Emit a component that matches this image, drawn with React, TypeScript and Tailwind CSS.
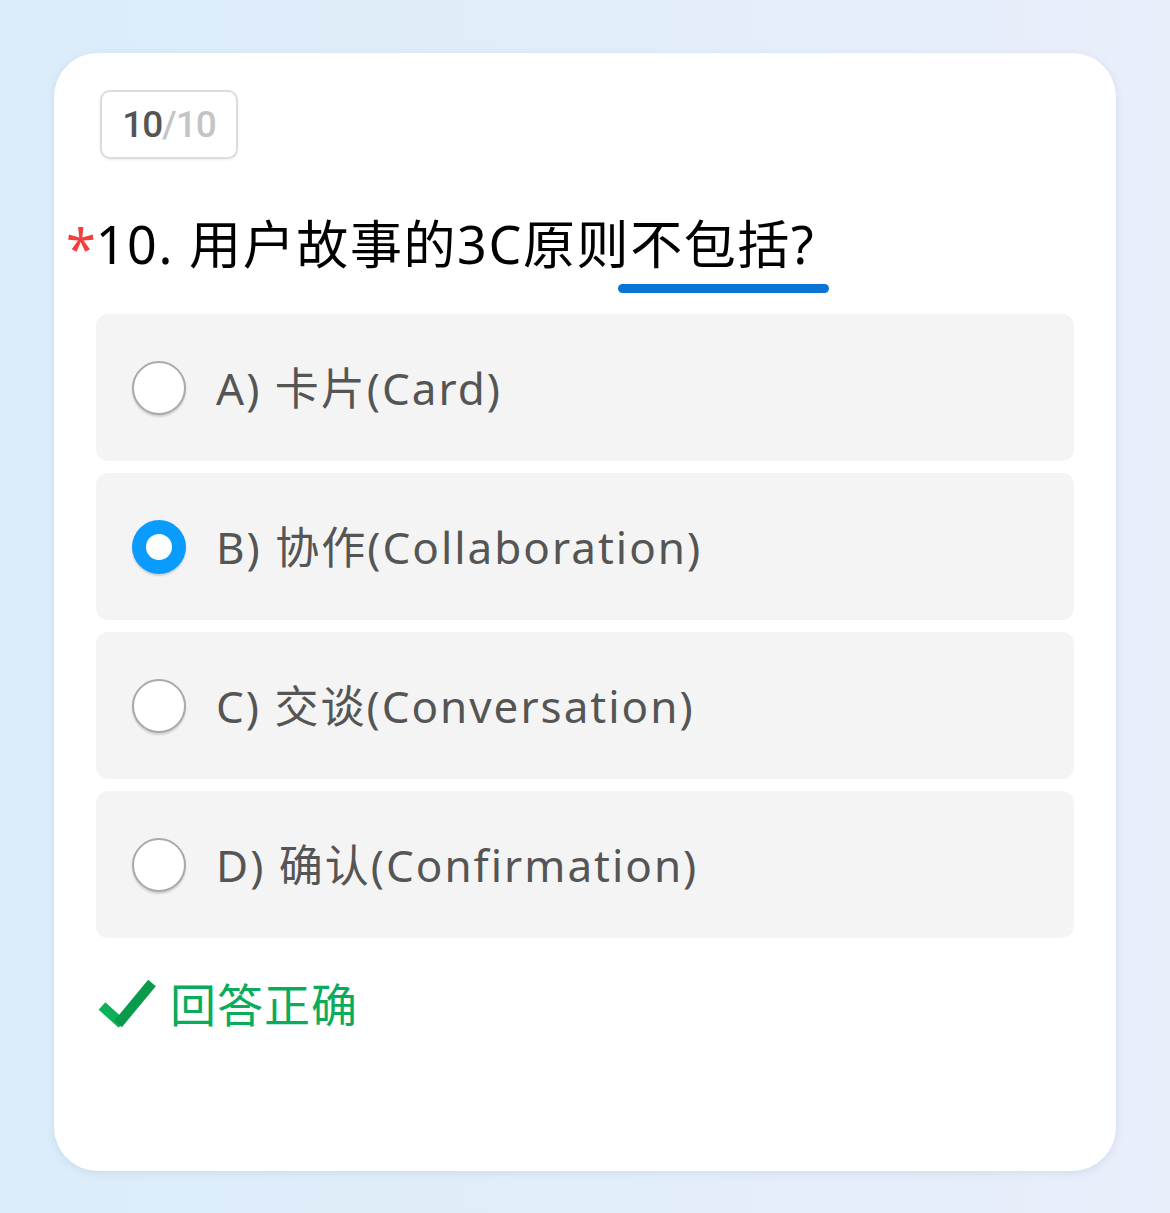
import React from 'react';

const font = { fontFamily: '"Noto Sans", "Noto Sans CJK SC", sans-serif' };

const options = [
  { key: 'A', label: '卡片(Card)', checked: false },
  { key: 'B', label: '协作(Collaboration)', checked: true },
  { key: 'C', label: '交谈(Conversation)', checked: false },
  { key: 'D', label: '确认(Confirmation)', checked: false },
];

function Radio({ checked }: { checked: boolean }) {
  if (checked) {
    return (
      <span className="w-[54px] h-[54px] rounded-full bg-[#0a9bff] flex items-center justify-center shadow-[0_2px_2px_rgba(0,0,0,0.15)] shrink-0">
        <span className="w-[26px] h-[26px] rounded-full bg-white" />
      </span>
    );
  }
  return (
    <span className="w-[54px] h-[54px] rounded-full bg-white border-2 border-[#a9a9a9] shadow-[0_2px_2px_rgba(0,0,0,0.15)] shrink-0" />
  );
}

export default function App() {
  return (
    <div
      className="min-h-screen w-full bg-gradient-to-r from-[#dbedf9] to-[#e9eefb] pt-[53px] pb-[42px] px-[54px]"
      style={font}
    >
      <div className="bg-white rounded-[44px] shadow-[0_2px_8px_rgba(60,90,130,0.12)] h-[1118px] px-[42px] pt-[37px]">
        {/* Progress badge */}
        <div
          className="ml-[4px] w-[138px] h-[69px] rounded-[10px] border-2 border-[#dcdcdc] shadow-[0_1px_3px_rgba(0,0,0,0.08)] flex items-center justify-center text-[37px] font-medium tracking-[-1px]"
          style={{ fontFamily: 'Roboto, sans-serif' }}
        >
          <span className="text-[#555555]">10</span>
          <span className="text-[#c4c4c4]">/10</span>
        </div>

        {/* Question */}
        <div className="-ml-[30px] mt-[50px] flex items-start text-[52px] leading-[70px] text-black tracking-[1.6px]">
          <span className="text-[#f43f3f] text-[54px] leading-[70px] mt-[4px] tracking-normal">*</span>
          <span>
            10. 用户故事的3C原则
            <span className="relative">
              不包括?
              <span className="absolute -left-[12px] -right-[14px] -bottom-[14px] h-[9px] rounded-full bg-[#0a74d6]" />
            </span>
          </span>
        </div>

        {/* Options */}
        <div className="mt-[31px] flex flex-col gap-[12px]">
          {options.map((o) => (
            <div
              key={o.key}
              className="h-[147px] rounded-[12px] bg-[#f4f4f4] flex items-center gap-[30px] pl-[36px]"
            >
              <Radio checked={o.checked} />
              <span className="text-[44px] text-[#555555] tracking-[2px]">
                {o.key}) {o.label}
              </span>
            </div>
          ))}
        </div>

        {/* Result */}
        <div className="mt-[36px] ml-[2px] flex items-center gap-[14px]">
          <svg width="58" height="50" viewBox="0 0 58 50">
            <line x1="4" y1="27" x2="24" y2="45" stroke="#0db159" strokeWidth="10" />
            <line x1="20" y1="45" x2="54" y2="4" stroke="#0a9a4c" strokeWidth="10" />
          </svg>
          <span className="text-[46px] text-[#09ac5a] leading-[60px] tracking-[1px]">回答正确</span>
        </div>
      </div>
    </div>
  );
}
